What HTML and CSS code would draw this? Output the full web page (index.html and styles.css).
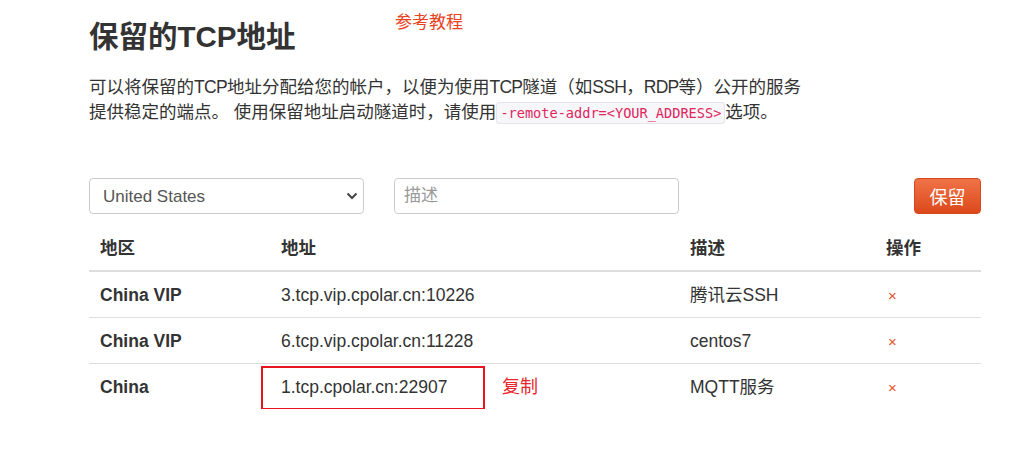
FILE: index.html
```html
<!DOCTYPE html>
<html lang="zh-CN">
<head>
<meta charset="utf-8">
<title>保留的TCP地址</title>
<link rel="stylesheet" href="styles.css">
</head>
<body>
<div class="page">
  <span class="note-link">参考教程</span>
  <h1 class="title">保留的TCP地址</h1>
  <p class="intro">可以将保留的<span class="lat">TCP</span>地址分配给您的帐户，以便为使用<span class="lat">TCP</span>隧道（如<span class="lat">SSH</span>，<span class="lat">RDP</span>等）公开的服务<br>提供稳定的端点。 使用保留地址启动隧道时，请使用<code class="code">-remote-addr=&lt;YOUR_ADDRESS&gt;</code>选项。</p>

  <form class="reserve-form">
    <div class="select-wrap">
      <select class="select">
        <option>United States</option>
      </select>
      <svg class="chevron" width="12" height="8" viewBox="0 0 12 8"><path d="M1.5 1.5 L6 6 L10.5 1.5" fill="none" stroke="#444" stroke-width="2"/></svg>
    </div>
    <input class="desc-input" type="text" placeholder="描述">
    <button class="btn-reserve" type="button">保留</button>
  </form>

  <table class="addr-table">
    <colgroup>
      <col class="c-region"><col class="c-addr"><col class="c-desc"><col class="c-op">
    </colgroup>
    <thead>
      <tr><th>地区</th><th>地址</th><th>描述</th><th>操作</th></tr>
    </thead>
    <tbody>
      <tr><td class="region">China VIP</td><td>3.tcp.vip.cpolar.cn:10226</td><td>腾讯云SSH</td><td><span class="del">×</span></td></tr>
      <tr><td class="region">China VIP</td><td>6.tcp.vip.cpolar.cn:11228</td><td>centos7</td><td><span class="del">×</span></td></tr>
      <tr><td class="region">China</td><td><span class="marked">1.tcp.cpolar.cn:22907<span class="mark-box"></span><span class="copy-note">复制</span></span></td><td>MQTT服务</td><td><span class="del">×</span></td></tr>
    </tbody>
  </table>
</div>
</body>
</html>
```

FILE: styles.css
```css
* { box-sizing: border-box; }
html, body { margin: 0; padding: 0; background: #fff; }
body {
  font-family: "Liberation Sans", "Noto Sans CJK SC", sans-serif;
  color: #333;
  font-size: 17.5px;
}
.page {
  position: relative;
  width: 892px;
  margin-left: 89px;
  padding-top: 19px;
}
.note-link {
  position: absolute;
  left: 306px;
  top: 12px;
  color: #e8431e;
  font-size: 17px;
  line-height: 22px;
}
.title {
  margin: 0 0 20px;
  font-size: 29.5px;
  line-height: 36px;
  font-weight: 700;
  color: #333;
}
.intro {
  margin: 0;
  line-height: 25px;
}
.lat { letter-spacing: -0.7px; }
.code {
  font-family: "DejaVu Sans Mono", "Liberation Mono", monospace;
  font-size: 13.6px;
  color: #e0245e;
  background: #f7f7f9;
  border: 1px solid #e4e4ea;
  border-radius: 3px;
  padding: 2px 3px;
}
.reserve-form {
  display: flex;
  align-items: center;
  margin-top: 52px;
  height: 36px;
}
.select-wrap {
  position: relative;
  width: 275px;
  height: 36px;
}
.select {
  appearance: none;
  -webkit-appearance: none;
  width: 100%;
  height: 36px;
  border: 1px solid #ccc;
  border-radius: 4px;
  background: #fff;
  padding: 0 30px 0 13px;
  font-family: inherit;
  font-size: 17px;
  color: #555;
}
.chevron {
  position: absolute;
  right: 6px;
  top: 14px;
}
.desc-input {
  margin-left: 30px;
  width: 285px;
  height: 36px;
  border: 1px solid #ccc;
  border-radius: 4px;
  padding: 0 9px;
  font-family: inherit;
  font-size: 17px;
  color: #555;
}
.desc-input::placeholder { color: #999; }
.btn-reserve {
  margin-left: auto;
  width: 67px;
  height: 36px;
  border: 1px solid #d44a1e;
  border-radius: 4px;
  background: linear-gradient(#f07348, #dc491b);
  color: #fff;
  font-family: inherit;
  font-size: 18px;
  padding: 0;
}
.addr-table {
  margin-top: 12px;
  width: 892px;
  border-collapse: collapse;
  table-layout: fixed;
}
.c-region { width: 181px; }
.c-addr { width: 409px; }
.c-desc { width: 196px; }
.c-op { width: 106px; }
.addr-table th,
.addr-table td {
  text-align: left;
  padding: 10px 11px;
  line-height: 25px;
  font-size: 17.5px;
}
.addr-table th {
  font-weight: 700;
  border-bottom: 2px solid #ddd;
  padding-bottom: 9px;
}
.addr-table tbody tr + tr td { border-top: 1px solid #ddd; }
.addr-table tbody td { padding-top: 11px; padding-bottom: 9px; }
.region { font-weight: 700; }
.del {
  color: #e8531f;
  font-size: 15px;
  padding-left: 2px;
}
.marked { position: relative; }
.mark-box {
  position: absolute;
  left: -20px;
  top: -11px;
  width: 224px;
  height: 44px;
  border: 2px solid #e8141f;
}
.copy-note {
  position: absolute;
  left: 221px;
  top: -2px;
  white-space: nowrap;
  color: #e8272c;
  font-size: 18px;
}
```
